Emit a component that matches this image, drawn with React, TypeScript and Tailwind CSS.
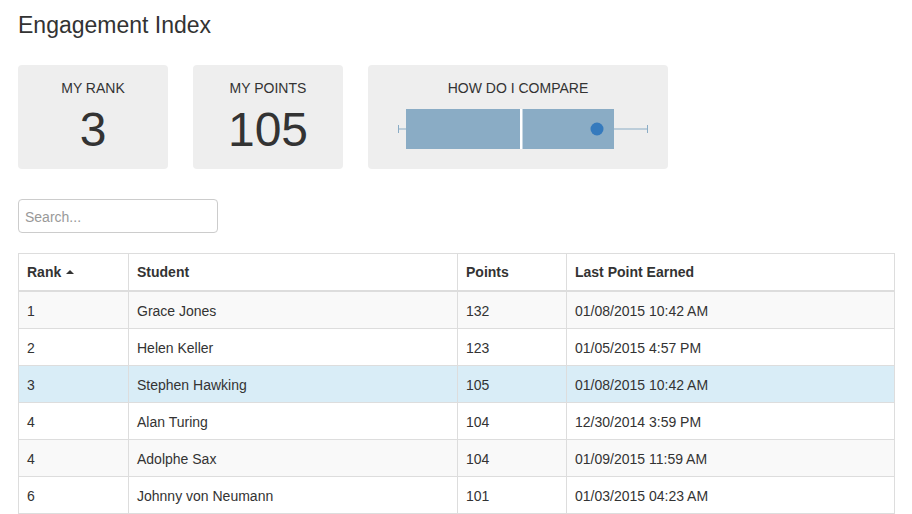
const rows = [
  { rank: 1, student: 'Grace Jones', points: 132, last: '01/08/2015 10:42 AM' },
  { rank: 2, student: 'Helen Keller', points: 123, last: '01/05/2015 4:57 PM' },
  { rank: 3, student: 'Stephen Hawking', points: 105, last: '01/08/2015 10:42 AM', me: true },
  { rank: 4, student: 'Alan Turing', points: 104, last: '12/30/2014 3:59 PM' },
  { rank: 4, student: 'Adolphe Sax', points: 104, last: '01/09/2015 11:59 AM' },
  { rank: 6, student: 'Johnny von Neumann', points: 101, last: '01/03/2015 04:23 AM' },
]

function StatCard({ label, value }: { label: string; value: string }) {
  return (
    <div className="w-[150px] h-[104px] bg-[#eeeeee] rounded-[4px] flex flex-col items-center pt-[13px]">
      <div className="text-[14px] leading-5 uppercase">{label}</div>
      <div className="text-[48px] leading-[48px] font-light mt-[8px]">{value}</div>
    </div>
  )
}

function CompareCard() {
  return (
    <div className="w-[300px] h-[104px] bg-[#eeeeee] rounded-[4px] flex flex-col items-center pt-[13px]">
      <div className="text-[14px] leading-5 uppercase">How do I compare</div>
      {/* box plot */}
      <svg width="300" height="50" viewBox="0 0 300 50" className="mt-[7px]">
        <line x1="30.5" y1="24" x2="38" y2="24" stroke="#8aacc5" strokeWidth="1" />
        <line x1="246" y1="24" x2="279.5" y2="24" stroke="#8aacc5" strokeWidth="1" />
        <line x1="30.5" y1="20" x2="30.5" y2="28" stroke="#8aacc5" strokeWidth="1" />
        <line x1="279.5" y1="20" x2="279.5" y2="28" stroke="#8aacc5" strokeWidth="1" />
        <rect x="38" y="4" width="208" height="40" fill="#8aacc5" />
        <rect x="152" y="4" width="2.5" height="40" fill="#ffffff" />
        <circle cx="229" cy="24" r="6.5" fill="#357abd" />
      </svg>
    </div>
  )
}

export default function App() {
  return (
    <div className="min-h-screen bg-white text-[#333333] font-['Liberation_Sans',Arial,sans-serif] px-[18px] pt-3">
      <h1 className="text-[23px] leading-[26px] font-normal">Engagement Index</h1>

      {/* Summary cards */}
      <div className="flex gap-[25px] mt-[27px]">
        <StatCard label="My Rank" value="3" />
        <StatCard label="My Points" value="105" />
        <CompareCard />
      </div>

      {/* Search */}
      <input
        type="text"
        placeholder="Search..."
        className="mt-[30px] block w-[200px] h-[34px] border border-[#cccccc] rounded-[4px] px-[6px] pt-[1px] text-[14px] placeholder:text-[#999999] outline-none"
      />

      {/* Leaderboard */}
      <table className="mt-[20px] w-[877px] border-collapse text-[14px] leading-5 text-left">
        <thead>
          <tr>
            <th className="w-[110px] border border-[#dddddd] border-b-2 p-2 font-bold">
              <span className="inline-flex items-center gap-[5px]">
                Rank
                <svg width="8" height="4" viewBox="0 0 8 4">
                  <path d="M0 4 L4 0 L8 4 Z" fill="#333333" />
                </svg>
              </span>
            </th>
            <th className="w-[329px] border border-[#dddddd] border-b-2 p-2 font-bold">Student</th>
            <th className="w-[109px] border border-[#dddddd] border-b-2 p-2 font-bold">Points</th>
            <th className="border border-[#dddddd] border-b-2 p-2 font-bold">Last Point Earned</th>
          </tr>
        </thead>
        <tbody>
          {rows.map((r, i) => (
            <tr
              key={i}
              className={r.me ? 'bg-[#d9edf7]' : i % 2 === 0 ? 'bg-[#f9f9f9]' : 'bg-white'}
            >
              <td className="border border-[#dddddd] px-2 pt-[9px] pb-[7px]">{r.rank}</td>
              <td className="border border-[#dddddd] px-2 pt-[9px] pb-[7px]">{r.student}</td>
              <td className="border border-[#dddddd] px-2 pt-[9px] pb-[7px]">{r.points}</td>
              <td className="border border-[#dddddd] px-2 pt-[9px] pb-[7px]">{r.last}</td>
            </tr>
          ))}
        </tbody>
      </table>
    </div>
  )
}
